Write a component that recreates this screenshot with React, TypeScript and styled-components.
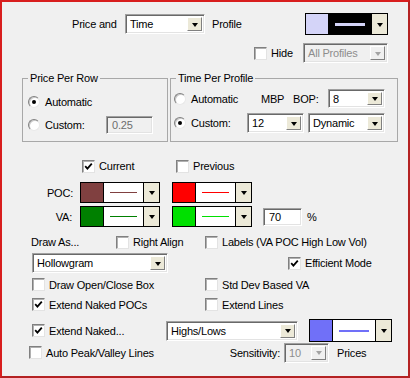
import styled, { createGlobalStyle } from 'styled-components'

const GlobalStyle = createGlobalStyle`
  html, body {
    margin: 0;
    padding: 0;
    background: #f0f0f0;
  }
`

const Dialog = styled.div`
  width: 410px;
  height: 378px;
  box-sizing: border-box;
  border: 2px solid #d81e1e;
  border-right-color: #b42222;
  border-bottom-color: #b42222;
  background: #f0f0f0;
  font-family: 'Liberation Sans', Arial, sans-serif;
  font-size: 11px;
  letter-spacing: -0.2px;
  color: #000;
  display: flex;
  flex-direction: column;
`

const Row = styled.div<{ $top: number; $h: number; $pl: number }>`
  display: flex;
  align-items: center;
  margin-top: ${(p) => p.$top}px;
  height: ${(p) => p.$h}px;
  padding-left: ${(p) => p.$pl}px;
`

const Label = styled.span<{ $w?: number; $ml?: number; $right?: boolean; $grey?: boolean }>`
  display: inline-block;
  flex: none;
  white-space: nowrap;
  width: ${(p) => (p.$w ? `${p.$w}px` : 'auto')};
  margin-left: ${(p) => p.$ml ?? 0}px;
  text-align: ${(p) => (p.$right ? 'right' : 'left')};
  color: ${(p) => (p.$grey ? '#6d6d6d' : '#000')};
`

const sunken = `
  border: 1px solid;
  border-color: #a0a0a0 #ffffff #ffffff #a0a0a0;
  box-shadow: inset 1px 1px 0 #696969, inset -1px -1px 0 #e3e3e3;
`

const SelectBox = styled.div<{ $w: number; $h: number; $ml?: number; $disabled?: boolean }>`
  ${sunken}
  box-sizing: border-box;
  flex: none;
  width: ${(p) => p.$w}px;
  height: ${(p) => p.$h}px;
  margin-left: ${(p) => p.$ml ?? 0}px;
  display: flex;
  align-items: stretch;
  padding: 2px;
  background: ${(p) => (p.$disabled ? '#f0f0f0' : '#fff')};
  color: ${(p) => (p.$disabled ? '#8d8d8d' : '#000')};
`

const SelectText = styled.span`
  flex: 1;
  display: flex;
  align-items: center;
  padding-left: 2px;
  white-space: nowrap;
  overflow: hidden;
`

const DropButton = styled.div<{ $disabled?: boolean; $w?: number }>`
  flex: none;
  width: ${(p) => p.$w ?? 15}px;
  box-sizing: border-box;
  background: ${(p) => (p.$disabled ? '#f0f0f0' : '#ece9d8')};
  border: 1px solid;
  border-color: #fff #808080 #808080 #fff;
  display: flex;
  align-items: center;
  justify-content: center;

  &::after {
    content: '';
    border-left: 3.5px solid transparent;
    border-right: 3.5px solid transparent;
    border-top: 4px solid ${(p) => (p.$disabled ? '#a3a3a3' : '#000')};
    margin-top: 1px;
  }
`

const Select = ({
  w,
  h = 20,
  ml,
  value,
  disabled,
}: {
  w: number
  h?: number
  ml?: number
  value: string
  disabled?: boolean
}) => (
  <SelectBox $w={w} $h={h} $ml={ml} $disabled={disabled}>
    <SelectText>{value}</SelectText>
    <DropButton $disabled={disabled} />
  </SelectBox>
)

const Input = styled.div<{ $w: number; $h: number; $ml?: number; $disabled?: boolean }>`
  ${sunken}
  box-sizing: border-box;
  flex: none;
  width: ${(p) => p.$w}px;
  height: ${(p) => p.$h}px;
  margin-left: ${(p) => p.$ml ?? 0}px;
  padding-left: 5px;
  display: flex;
  align-items: center;
  background: ${(p) => (p.$disabled ? '#f0f0f0' : '#fff')};
  color: ${(p) => (p.$disabled ? '#6d6d6d' : '#000')};
`

const CheckBoxBox = styled.div<{ $ml?: number }>`
  flex: none;
  box-sizing: border-box;
  width: 13px;
  height: 13px;
  margin-left: ${(p) => p.$ml ?? 0}px;
  background: #fff;
  border: 1px solid;
  border-color: #808080 #e3e3e3 #e3e3e3 #808080;
  box-shadow: inset 1px 1px 0 #b0b0b0;
  display: flex;
  align-items: center;
  justify-content: center;
`

const Check = ({ on, ml }: { on?: boolean; ml?: number }) => (
  <CheckBoxBox $ml={ml}>
    {on && (
      <svg width="9" height="9" viewBox="0 0 9 9">
        <path d="M1.2 4.2 L3.4 6.6 L7.8 1.6" fill="none" stroke="#000" strokeWidth="1.8" />
      </svg>
    )}
  </CheckBoxBox>
)

const RadioCircle = styled.div<{ $ml?: number }>`
  flex: none;
  box-sizing: border-box;
  width: 12px;
  height: 12px;
  margin-left: ${(p) => p.$ml ?? 0}px;
  border-radius: 50%;
  background: #fff;
  border: 1px solid;
  border-color: #808080 #e8e8e8 #e8e8e8 #808080;
  box-shadow: inset 1px 1px 0 #c8c8c8;
  display: flex;
  align-items: center;
  justify-content: center;
`

const RadioDot = styled.div`
  width: 4px;
  height: 4px;
  border-radius: 50%;
  background: #000;
`

const Radio = ({ on, ml }: { on?: boolean; ml?: number }) => (
  <RadioCircle $ml={ml}>{on && <RadioDot />}</RadioCircle>
)

const ColorBox = styled.div<{ $w: number; $h: number; $ml?: number }>`
  flex: none;
  box-sizing: border-box;
  width: ${(p) => p.$w}px;
  height: ${(p) => p.$h}px;
  margin-left: ${(p) => p.$ml ?? 0}px;
  border: 1px solid #000;
  display: flex;
`

const Swatch = styled.div<{ $color: string }>`
  width: 22px;
  flex: none;
  background: ${(p) => p.$color};
  border-right: 1px solid #000;
`

const LineArea = styled.div<{ $bg: string }>`
  flex: 1;
  background: ${(p) => p.$bg};
  display: flex;
  align-items: center;
  padding: 0 6px;
`

const Stroke = styled.div<{ $color: string; $thick: number }>`
  flex: 1;
  height: ${(p) => p.$thick}px;
  background: ${(p) => p.$color};
`

const ColorButton = styled(DropButton)`
  border-color: #000 #ece9d8 #ece9d8 #000;
  border-width: 0 0 0 1px;
`

const ColorLine = ({
  w = 80,
  h = 21,
  ml,
  color,
  bg = '#fff',
  line,
  thick = 1,
}: {
  w?: number
  h?: number
  ml?: number
  color: string
  bg?: string
  line?: string
  thick?: number
}) => (
  <ColorBox $w={w} $h={h} $ml={ml}>
    <Swatch $color={color} />
    <LineArea $bg={bg}>
      <Stroke $color={line ?? color} $thick={thick} />
    </LineArea>
    <ColorButton $w={16} />
  </ColorBox>
)

const Groups = styled.div`
  display: flex;
  margin-top: 9px;
  padding-left: 20px;
  height: 70px;
`

const Group = styled.fieldset<{ $w: number; $ml?: number }>`
  box-sizing: border-box;
  width: ${(p) => p.$w}px;
  margin: 0 0 0 ${(p) => p.$ml ?? 0}px;
  padding: 0;
  border: 1px solid #a8a8a8;
  display: flex;
  flex-direction: column;

  legend {
    padding: 0 2px;
    margin-left: 5px;
    line-height: 13px;
    height: 13px;
  }
`

export default function App() {
  return (
    <>
      <GlobalStyle />
      <Dialog>
        <Row $top={11} $h={22} $pl={70}>
          <Label $w={53}>Price and</Label>
          <Select w={80} value="Time" />
          <Label $w={93} $ml={7}>
            Profile
          </Label>
          <ColorLine w={83} h={22} color="#d4d4f8" bg="#000" thick={3} />
        </Row>

        <Row $top={8} $h={20} $pl={252}>
          <Check />
          <Label $w={32} $ml={4}>
            Hide
          </Label>
          <Select w={85} value="All Profiles" disabled />
        </Row>

        <Groups>
          <Group $w={146}>
            <legend>Price Per Row</legend>
            <Row $top={9} $h={16} $pl={5}>
              <Radio on />
              <Label $ml={5}>Automatic</Label>
            </Row>
            <Row $top={6} $h={18} $pl={5}>
              <Radio />
              <Label $w={61} $ml={5}>
                Custom:
              </Label>
              <Input $w={47} $h={18} $disabled>
                0.25
              </Input>
            </Row>
          </Group>

          <Group $w={228} $ml={2}>
            <legend>Time Per Profile</legend>
            <Row $top={4} $h={19} $pl={3}>
              <Radio />
              <Label $w={70} $ml={5}>
                Automatic
              </Label>
              <Label $w={32}>MBP</Label>
              <Label $w={35}>BOP:</Label>
              <Select w={57} h={19} value="8" />
            </Row>
            <Row $top={5} $h={20} $pl={3}>
              <Radio on />
              <Label $w={56} $ml={5}>
                Custom:
              </Label>
              <Select w={57} value="12" />
              <Select w={77} ml={4} value="Dynamic" />
            </Row>
          </Group>
        </Groups>

        <Row $top={17} $h={14} $pl={80}>
          <Check on />
          <Label $w={77} $ml={4}>
            Current
          </Label>
          <Check />
          <Label $ml={4}>Previous</Label>
        </Row>

        <Row $top={9} $h={21} $pl={0}>
          <Label $w={71} $right>
            POC:
          </Label>
          <ColorLine ml={7} color="#804040" />
          <ColorLine ml={12} color="#ff0000" />
        </Row>

        <Row $top={3} $h={21} $pl={0}>
          <Label $w={70} $right>
            VA:
          </Label>
          <ColorLine ml={8} color="#008000" />
          <ColorLine ml={12} color="#00e000" />
          <Input $w={39} $h={18} $ml={11}>
            70
          </Input>
          <Label $ml={5}>%</Label>
        </Row>

        <Row $top={8} $h={14} $pl={29}>
          <Label $w={85}>Draw As...</Label>
          <Check />
          <Label $w={72} $ml={4}>
            Right Align
          </Label>
          <Check />
          <Label $ml={4}>Labels (VA POC High Low Vol)</Label>
        </Row>

        <Row $top={4} $h={20} $pl={30}>
          <Select w={136} value="Hollowgram" />
          <Check ml={120} on />
          <Label $ml={4}>Efficient Mode</Label>
        </Row>

        <Row $top={5} $h={13} $pl={30}>
          <Check />
          <Label $w={156} $ml={4}>
            Draw Open/Close Box
          </Label>
          <Check />
          <Label $ml={4}>Std Dev Based VA</Label>
        </Row>

        <Row $top={6} $h={15} $pl={30}>
          <Check on />
          <Label $w={156} $ml={4}>
            Extend Naked POCs
          </Label>
          <Check />
          <Label $ml={4}>Extend Lines</Label>
        </Row>

        <Row $top={7} $h={23} $pl={30}>
          <Check on />
          <Label $w={117} $ml={4}>
            Extend Naked...
          </Label>
          <Select w={132} value="Highs/Lows" />
          <ColorLine ml={11} w={83} h={23} color="#7070f8" thick={2} />
        </Row>

        <Row $top={1} $h={19} $pl={27}>
          <Check />
          <Label $w={180} $ml={4}>
            Auto Peak/Valley Lines
          </Label>
          <Label $w={54} $right>
            Sensitivity:
          </Label>
          <Select w={45} ml={4} value="10" disabled />
          <Label $ml={8}>Prices</Label>
        </Row>
      </Dialog>
    </>
  )
}
